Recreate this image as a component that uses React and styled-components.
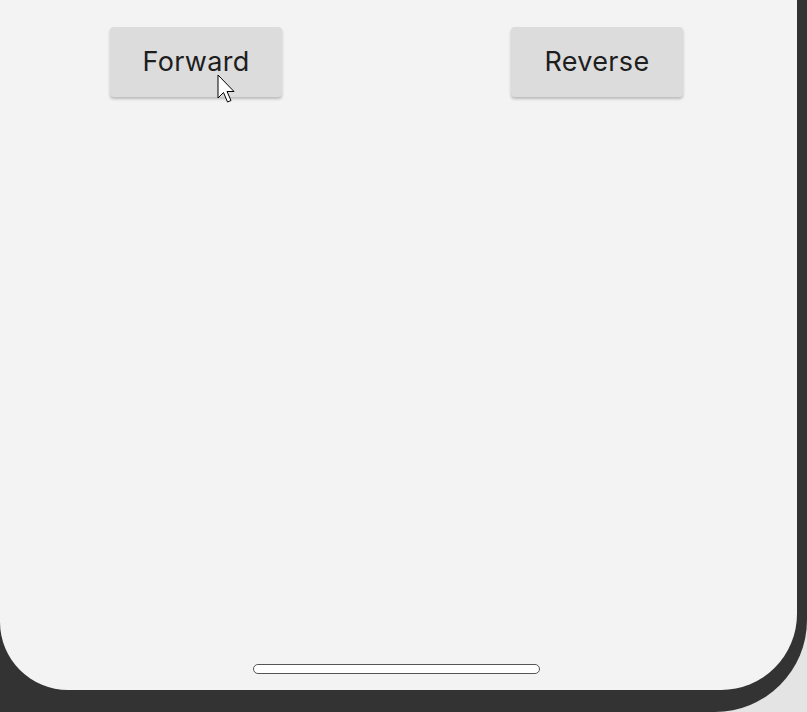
import styled, { createGlobalStyle } from "styled-components";

const Global = createGlobalStyle`
  html, body {
    margin: 0;
    padding: 0;
    background: #e4e4e4;
    font-family: Inter, Roboto, sans-serif;
  }
`;

const Page = styled.div`
  width: 807px;
  height: 712px;
  overflow: hidden;
`;

const Frame = styled.div`
  width: 797px;
  padding: 0 10px 22px 0;
  background: #333333;
  border-bottom-right-radius: 92px;
`;

const Screen = styled.div`
  position: relative;
  height: 690px;
  background: #f3f3f3;
  border-radius: 0 0 76px 68px;
  display: flex;
  flex-direction: column;
  justify-content: space-between;
`;

const ButtonRow = styled.div`
  display: flex;
  justify-content: space-between;
  padding: 27px 114px 0 110px;
`;

const Button = styled.button`
  position: relative;
  width: 172px;
  height: 70px;
  padding: 0 0 2px;
  border: none;
  border-radius: 4px;
  background: #dcdcdc;
  box-shadow: 0 2px 3px rgba(0, 0, 0, 0.24);
  color: #1e1e1e;
  font-family: Inter, Roboto, sans-serif;
  font-size: 27px;
  letter-spacing: 0.3px;
  cursor: pointer;
`;

const HomeBar = styled.div`
  align-self: center;
  width: 285px;
  height: 8px;
  margin: 0 0 16px -4px;
  background: #ffffff;
  border: 1px solid #555;
  border-radius: 6px;
`;

const Cursor = styled.svg`
  position: absolute;
  left: 107px;
  top: 47px;
`;

const Pointer = () => (
  <Cursor width="20" height="34" viewBox="0 0 20 34">
    <path
      d="M1 1 L1 24 L6.5 18.5 L10.5 28 L14 26.5 L10 17.5 L17 17.5 Z"
      fill="#fff"
      stroke="#000"
      strokeWidth="1"
      strokeLinejoin="round"
    />
  </Cursor>
);

export default function App() {
  return (
    <Page>
      <Global />
      <Frame>
        <Screen>
          <ButtonRow>
            <Button>
              Forward
              <Pointer />
            </Button>
            <Button>Reverse</Button>
          </ButtonRow>
          <HomeBar />
        </Screen>
      </Frame>
    </Page>
  );
}
